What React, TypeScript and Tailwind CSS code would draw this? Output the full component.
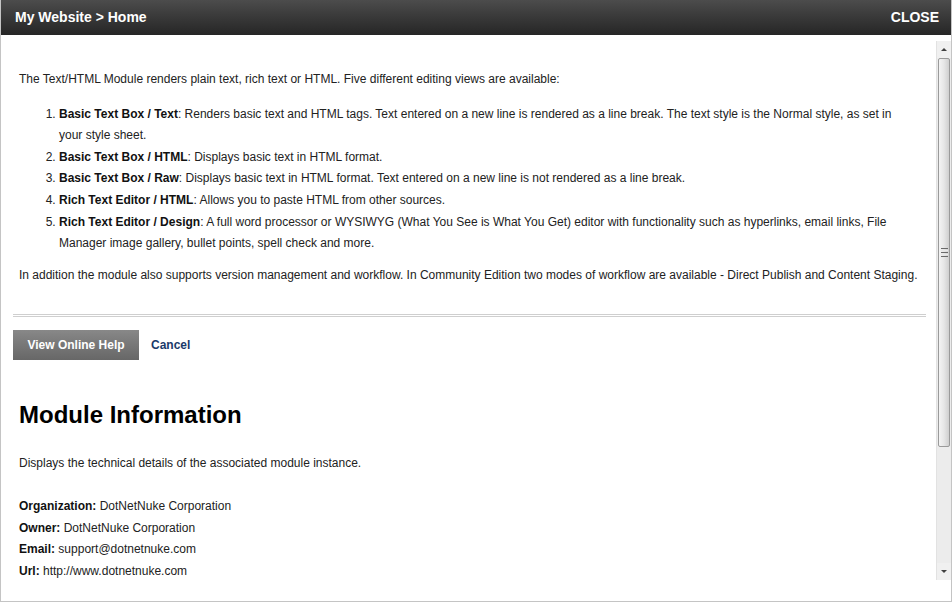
import React from 'react';

const items = [
  {
    title: 'Basic Text Box / Text',
    text: 'Renders basic text and HTML tags. Text entered on a new line is rendered as a line break. The text style is the Normal style, as set in your style sheet.',
  },
  { title: 'Basic Text Box / HTML', text: 'Displays basic text in HTML format.' },
  {
    title: 'Basic Text Box / Raw',
    text: 'Displays basic text in HTML format. Text entered on a new line is not rendered as a line break.',
  },
  { title: 'Rich Text Editor / HTML', text: 'Allows you to paste HTML from other sources.' },
  {
    title: 'Rich Text Editor / Design',
    text: 'A full word processor or WYSIWYG (What You See is What You Get) editor with functionality such as hyperlinks, email links, File Manager image gallery, bullet points, spell check and more.',
  },
];

const info = [
  ['Organization:', 'DotNetNuke Corporation'],
  ['Owner:', 'DotNetNuke Corporation'],
  ['Email:', 'support@dotnetnuke.com'],
  ['Url:', 'http://www.dotnetnuke.com'],
];

function Scrollbar() {
  return (
    <div className="w-[15px] mt-[6px] mb-[21px] flex flex-col bg-[#ececec] border-l border-[#e2e2e2]">
      <div className="h-[17px] flex items-center justify-center bg-[#f0f0f0]">
        <div className="w-0 h-0 border-l-[3px] border-r-[3px] border-b-[3px] border-l-transparent border-r-transparent border-b-[#404040]" />
      </div>
      <div className="h-[389px] mx-[1px] rounded-[2px] border border-[#9a9a9a] bg-gradient-to-r from-[#f4f4f4] via-[#e6e6e6] to-[#cfcfcf] flex flex-col items-center justify-center gap-[1px]">
        <div className="w-[7px] h-[1px] bg-[#6a6a6a]" />
        <div className="w-[7px] h-[1px] bg-[#e8e8e8]" />
        <div className="w-[7px] h-[1px] bg-[#6a6a6a]" />
        <div className="w-[7px] h-[1px] bg-[#e8e8e8]" />
        <div className="w-[7px] h-[1px] bg-[#6a6a6a]" />
      </div>
      <div className="flex-1" />
      <div className="h-[17px] flex items-center justify-center bg-[#f0f0f0]">
        <div className="w-0 h-0 border-l-[3px] border-r-[3px] border-t-[3px] border-l-transparent border-r-transparent border-t-[#404040]" />
      </div>
    </div>
  );
}

export default function App() {
  return (
    <div
      className="w-[952px] h-[602px] flex flex-col bg-white border-l border-r border-b border-[#c4c4c4] overflow-hidden text-[12px] text-[#222]"
      style={{ fontFamily: '"Liberation Sans", Arial, sans-serif' }}
    >
      <div className="h-[35px] shrink-0 flex items-center justify-between px-[15px] bg-gradient-to-b from-[#4c4c4c] to-[#262626] -mx-[1px]">
        <span className="text-white font-bold text-[14px]">My Website &gt; Home</span>
        <span className="text-white font-bold text-[14px] mr-[-2px]">CLOSE</span>
      </div>
      <div className="flex-1 flex overflow-hidden">
        <div className="flex-1 overflow-hidden pl-[12px] pr-[10px]">
          <div className="px-[6px] pt-[34px] leading-[21.6px]">
            <p>The Text/HTML Module renders plain text, rich text or HTML. Five different editing views are available:</p>
            <ol className="mt-[13px] pl-[40px] pr-[16px] list-decimal">
              {items.map((it) => (
                <li key={it.title}>
                  <b className="text-[#111]">{it.title}</b>: {it.text}
                </li>
              ))}
            </ol>
            <p className="mt-[10px]">
              In addition the module also supports version management and workflow. In Community Edition two modes of workflow are available - Direct Publish and Content Staging.
            </p>
          </div>
          <div className="mt-[28px] h-[3px] border-t border-b border-[#cfcfcf]" />
          <div className="mt-[13px] flex items-center gap-[12px]">
            <button className="w-[126px] h-[30px] bg-gradient-to-b from-[#888] to-[#676767] text-white font-bold text-[12px]">
              View Online Help
            </button>
            <span className="font-bold text-[#1a3a6a]">Cancel</span>
          </div>
          <div className="px-[6px]">
            <h2 className="mt-[41px] text-[24px] font-bold text-black leading-[28px]">Module Information</h2>
            <p className="mt-[24px] leading-[21.6px]">Displays the technical details of the associated module instance.</p>
            <div className="mt-[21px] leading-[21.6px]">
              {info.map(([k, v]) => (
                <div key={k}>
                  <b className="text-[#111]">{k}</b> {v}
                </div>
              ))}
            </div>
          </div>
        </div>
        <Scrollbar />
      </div>
    </div>
  );
}
